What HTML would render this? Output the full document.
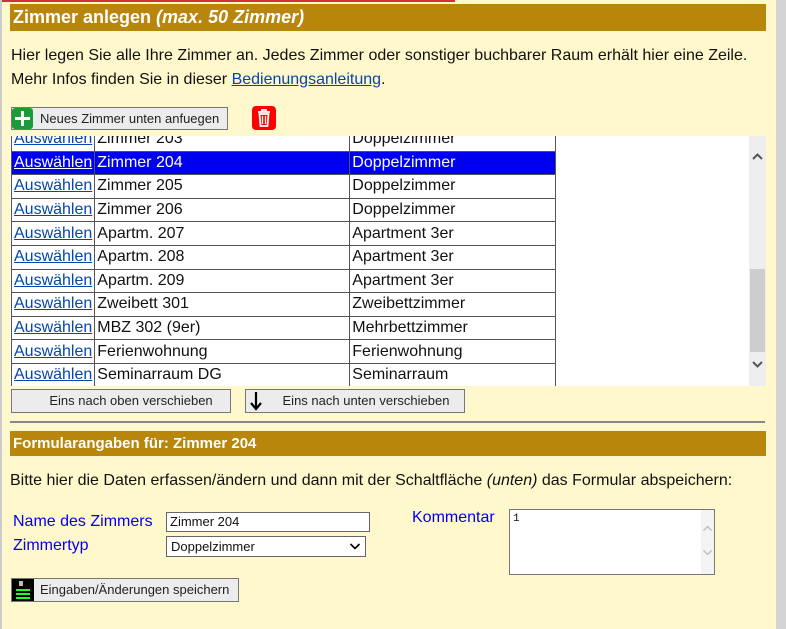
<!DOCTYPE html>
<html><head><meta charset="utf-8"><style>
*{box-sizing:border-box}
body{margin:0;width:786px;height:629px;background:#fff8cc;font-family:"Liberation Sans",Arial,sans-serif;position:relative;overflow:hidden;color:#111}
.a{position:absolute}
.hdr{background:#b8860b;color:#fff;font-weight:bold}
a{color:#0645ad;text-decoration:underline}
.btn{position:absolute;background:#ececec;border:1px solid #777;font-size:13px;color:#222;text-align:center}
table{border-collapse:collapse;font-size:16px}
td{border:1px solid #555;height:23.6px;padding:0 2px;white-space:nowrap;background:#fff}
td a{color:#0645ad}
tr.sel td{background:#0000f0;color:#fff}
tr.sel td a{color:#fff}
.lbl{color:#0000ee;font-size:16px}
</style></head><body>
<div class="a" style="left:0;top:0;width:455px;height:2px;background:#c33"></div>
<div class="a" style="left:0;top:0;width:2px;height:629px;background:#ccc"></div>
<div class="a" style="left:776px;top:0;width:10px;height:629px;background:#d4d4d4"></div>
<div class="a hdr" style="left:10px;top:4px;width:756px;height:27px;font-size:18px;line-height:27px;padding-left:3px">Zimmer anlegen <i>(max. 50 Zimmer)</i></div>
<div class="a" style="left:11px;top:44px;font-size:16px;line-height:24px">Hier legen Sie alle Ihre Zimmer an. Jedes Zimmer oder sonstiger buchbarer Raum erhält hier eine Zeile.<br>Mehr Infos finden Sie in dieser <a>Bedienungsanleitung</a>.</div>
<div class="btn" style="left:11px;top:107px;width:217px;height:23px;line-height:21px;padding-left:28px;text-align:left">Neues Zimmer unten anfuegen</div>
<div class="a" style="left:12px;top:108px;width:21px;height:21px;background:#1a9a3a;border-radius:3px"><div class="a" style="left:9px;top:3px;width:3px;height:15px;background:#fff"></div><div class="a" style="left:3px;top:9px;width:15px;height:3px;background:#fff"></div></div>
<div class="a" style="left:252px;top:106px;width:24px;height:24px;background:#f00;border-radius:4px">
<svg width="24" height="24" viewBox="0 0 24 24"><path d="M6 6h12M10 6V4h4v2M7.5 8l1 12h7l1-12z" fill="none" stroke="#fff" stroke-width="1.8"/><path d="M10.5 10v8M13.5 10v8" stroke="#fff" stroke-width="1.3"/></svg></div>
<div class="a" style="left:10px;top:136px;width:739px;height:250px;background:#fff;overflow:hidden">
<table style="position:absolute;left:1px;top:-9px">
<col style="width:83px"><col style="width:255px"><col style="width:206px">
<tr><td><a>Auswählen</a></td><td>Zimmer 203</td><td>Doppelzimmer</td></tr>
<tr class="sel"><td><a>Auswählen</a></td><td>Zimmer 204</td><td>Doppelzimmer</td></tr>
<tr><td><a>Auswählen</a></td><td>Zimmer 205</td><td>Doppelzimmer</td></tr>
<tr><td><a>Auswählen</a></td><td>Zimmer 206</td><td>Doppelzimmer</td></tr>
<tr><td><a>Auswählen</a></td><td>Apartm. 207</td><td>Apartment 3er</td></tr>
<tr><td><a>Auswählen</a></td><td>Apartm. 208</td><td>Apartment 3er</td></tr>
<tr><td><a>Auswählen</a></td><td>Apartm. 209</td><td>Apartment 3er</td></tr>
<tr><td><a>Auswählen</a></td><td>Zweibett 301</td><td>Zweibettzimmer</td></tr>
<tr><td><a>Auswählen</a></td><td>MBZ 302 (9er)</td><td>Mehrbettzimmer</td></tr>
<tr><td><a>Auswählen</a></td><td>Ferienwohnung</td><td>Ferienwohnung</td></tr>
<tr><td><a>Auswählen</a></td><td>Seminarraum DG</td><td>Seminarraum</td></tr>
</table></div>
<div class="a" style="left:749px;top:136px;width:17px;height:250px;background:#eee">
<div class="a" style="left:1px;top:133px;width:15px;height:83px;background:#cdcdcd"></div>
<svg class="a" style="left:2px;top:16px" width="13" height="10"><path d="M2 7L6.5 2.5L11 7" fill="none" stroke="#555" stroke-width="2"/></svg>
<svg class="a" style="left:2px;top:223px" width="13" height="10"><path d="M2 3L6.5 7.5L11 3" fill="none" stroke="#555" stroke-width="2"/></svg>
</div>
<div class="btn" style="left:11px;top:389px;width:220px;height:24px;line-height:22px;padding-left:20px">Eins nach oben verschieben</div>
<div class="btn" style="left:245px;top:389px;width:220px;height:24px;line-height:22px;padding-left:22px">Eins nach unten verschieben</div>
<svg class="a" style="left:248px;top:390px" width="16" height="22"><path d="M8 2V19M3 13L8 19L13 13" fill="none" stroke="#000" stroke-width="2.2"/></svg>
<div class="a" style="left:10px;top:421px;width:755px;height:2px;background:#888"></div>
<div class="a hdr" style="left:10px;top:431px;width:756px;height:25px;font-size:15px;line-height:25px;padding-left:3px">Formularangaben für: Zimmer 204</div>
<div class="a" style="left:10px;top:472px;font-size:16px;letter-spacing:0px">Bitte hier die Daten erfassen/ändern und dann mit der Schaltfläche <i>(unten)</i> das Formular abspeichern:</div>
<div class="a lbl" style="left:13px;top:513px">Name des Zimmers</div>
<div class="a lbl" style="left:13px;top:537px">Zimmertyp</div>
<div class="a lbl" style="left:412px;top:509px">Kommentar</div>
<div class="a" style="left:166px;top:512px;width:204px;height:20px;background:#fff;border:1px solid #666;font-size:13px;line-height:18px;padding-left:3px">Zimmer 204</div>
<div class="a" style="left:166px;top:536px;width:200px;height:21px;background:#fff;border:1px solid #666;font-size:13px;line-height:19px;padding-left:4px">Doppelzimmer<svg class="a" style="right:4px;top:5px" width="12" height="9"><path d="M1.5 2L6 6.5L10.5 2" fill="none" stroke="#000" stroke-width="1.6"/></svg></div>
<div class="a" style="left:509px;top:509px;width:206px;height:66px;background:#fff;border:1px solid #777;font-family:'Liberation Mono',monospace;font-size:11px;padding:3px">1<div class="a" style="right:0;top:0;width:13px;height:64px;background:#f4f4f4">
<svg class="a" style="left:1px;top:14px" width="11" height="9"><path d="M1.5 6.5L5.5 2.5L9.5 6.5" fill="none" stroke="#bbb" stroke-width="1.3"/></svg>
<svg class="a" style="left:1px;top:38px" width="11" height="9"><path d="M1.5 2.5L5.5 6.5L9.5 2.5" fill="none" stroke="#bbb" stroke-width="1.3"/></svg></div></div>
<div class="btn" style="left:11px;top:578px;width:228px;height:24px;line-height:22px;padding-left:28px;text-align:left">Eingaben/Änderungen speichern</div>
<div class="a" style="left:12px;top:579px;width:22px;height:22px;background:#000">
<div class="a" style="left:7px;top:2px;width:4px;height:5px;background:#bbb"></div>
<div class="a" style="left:4px;top:10px;width:14px;height:2px;background:#2f2"></div>
<div class="a" style="left:4px;top:14px;width:14px;height:2px;background:#2f2"></div>
<div class="a" style="left:4px;top:18px;width:14px;height:2px;background:#2f2"></div>
</div>
</body></html>
